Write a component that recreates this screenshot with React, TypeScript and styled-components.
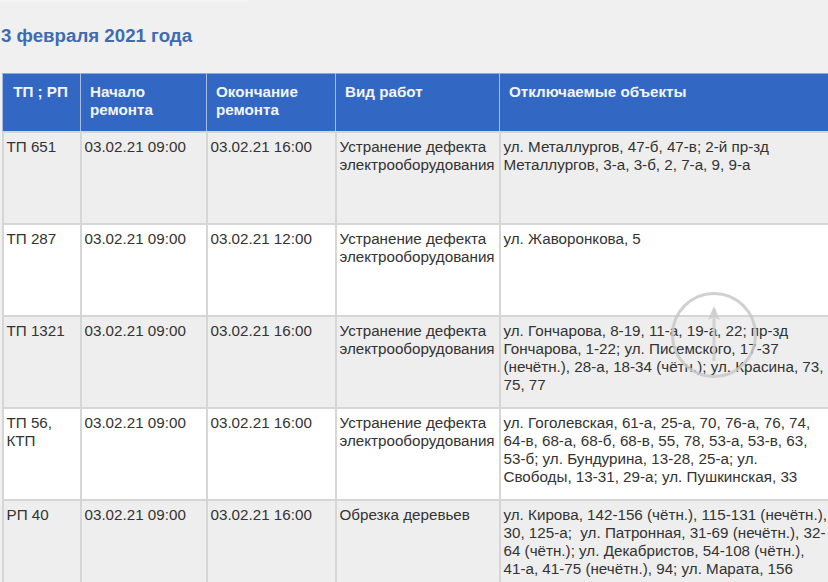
import styled, { createGlobalStyle } from "styled-components";

const rows = [
    {
        id: "ТП 651",
        start: "03.02.21 09:00",
        end: "03.02.21 16:00",
        work: "Устранение дефекта\nэлектрооборудования",
        objects: "ул. Металлургов, 47-б, 47-в; 2-й пр-зд\nМеталлургов, 3-а, 3-б, 2, 7-а, 9, 9-а",
    },
    {
        id: "ТП 287",
        start: "03.02.21 09:00",
        end: "03.02.21 12:00",
        work: "Устранение дефекта\nэлектрооборудования",
        objects: "ул. Жаворонкова, 5",
    },
    {
        id: "ТП 1321",
        start: "03.02.21 09:00",
        end: "03.02.21 16:00",
        work: "Устранение дефекта\nэлектрооборудования",
        objects: "ул. Гончарова, 8-19, 11-а, 19-а, 22; пр-зд\nГончарова, 1-22; ул. Писемского, 17-37\n(нечётн.), 28-а, 18-34 (чётн.); ул. Красина, 73,\n75, 77",
    },
    {
        id: "ТП 56,\nКТП",
        start: "03.02.21 09:00",
        end: "03.02.21 16:00",
        work: "Устранение дефекта\nэлектрооборудования",
        objects: "ул. Гоголевская, 61-а, 25-а, 70, 76-а, 76, 74,\n64-в, 68-а, 68-б, 68-в, 55, 78, 53-а, 53-в, 63,\n53-б; ул. Бундурина, 13-28, 25-а; ул.\nСвободы, 13-31, 29-а; ул. Пушкинская, 33",
    },
    {
        id: "РП 40",
        start: "03.02.21 09:00",
        end: "03.02.21 16:00",
        work: "Обрезка деревьев",
        objects: "ул. Кирова, 142-156 (чётн.), 115-131 (нечётн.),\n30, 125-а;\u00a0 ул. Патронная, 31-69 (нечётн.), 32-\n64 (чётн.); ул. Декабристов, 54-108 (чётн.),\n41-а, 41-75 (нечётн.), 94; ул. Марата, 156",
    },
];

export default function App() {
    return (
        <Page>
            <GlobalStyle />
            <TopStrip />
            <Title>3 февраля 2021 года</Title>
            <Table>
                <colgroup>
                    <col width="78" />
                    <col width="126" />
                    <col width="129" />
                    <col width="164" />
                    <col width="340" />
                </colgroup>
                <thead>
                    <tr>
                        <HeadCell $center>ТП ; РП</HeadCell>
                        <HeadCell>Начало<br />ремонта</HeadCell>
                        <HeadCell>Окончание<br />ремонта</HeadCell>
                        <HeadCell>Вид работ</HeadCell>
                        <HeadCell>Отключаемые объекты</HeadCell>
                    </tr>
                </thead>
                <tbody>
                    {rows.map((row, i) => (
                        <Row key={row.id} $even={i % 2 === 1}>
                            <Cell>{row.id}</Cell>
                            <Cell>{row.start}</Cell>
                            <Cell>{row.end}</Cell>
                            <Cell>{row.work}</Cell>
                            <Cell>{row.objects}</Cell>
                        </Row>
                    ))}
                </tbody>
            </Table>
            <ScrollTop viewBox="0 0 88 88" aria-hidden="true">
                <circle cx="44" cy="44" r="41.5" />
                <path d="M44 70V18" />
                <path className="head" d="M44 15L38 29L44 26L50 29Z" />
            </ScrollTop>
        </Page>
    );
}

const GlobalStyle = createGlobalStyle`
    html, body {
        margin: 0;
        padding: 0;
        background: #f0f0f0;
        overflow: hidden;
    }
`;

const Page = styled.div`
    position: relative;
    width: 828px;
    height: 582px;
    overflow: hidden;
    background: #f0f0f0;
    font-family: "Liberation Sans", Arial, sans-serif;
    color: #333;
`;

const TopStrip = styled.div`
    width: 248px;
    height: 2px;
    background: #f6f6f6;
`;

const Title = styled.h2`
    margin: 23px 0 0 1px;
    height: 48px;
    font-size: 18.7px;
    line-height: 21px;
    font-weight: bold;
    color: #3f6cb0;
`;

const Table = styled.table`
    margin-left: 1.5px;
    width: 837px;
    table-layout: fixed;
    border-collapse: collapse;
    font-size: 15.2px;
    line-height: 18px;
`;

const HeadCell = styled.th<{ $center?: boolean }>`
    height: 58px;
    box-sizing: border-box;
    padding: 9px ${(p) => (p.$center ? "10px" : "9px")} 0 ${(p) => (p.$center ? "8px" : "9px")};
    vertical-align: top;
    text-align: ${(p) => (p.$center ? "center" : "left")};
    font-weight: bold;
    color: #f2f5fb;
    background: #3268c4;
    border: 1px solid #a9bde0;
    border-top-color: #8fa9d8;
`;

const Row = styled.tr<{ $even?: boolean }>`
    background: ${(p) => (p.$even ? "#ffffff" : "#eeeeee")};
`;

const Cell = styled.td`
    height: 92px;
    box-sizing: border-box;
    padding: 5px 3px 0;
    vertical-align: top;
    white-space: pre-line;
    border: 2px solid #d6d6d6;
`;

const ScrollTop = styled.svg`
    position: absolute;
    left: 670px;
    top: 291px;
    width: 88px;
    height: 88px;
    fill: none;

    circle {
        stroke: rgba(200, 200, 200, 0.85);
        stroke-width: 3px;
    }

    path {
        stroke: rgba(205, 205, 205, 0.85);
        stroke-width: 3px;
    }

    .head {
        stroke: none;
        fill: rgba(205, 205, 205, 0.9);
    }
`;
